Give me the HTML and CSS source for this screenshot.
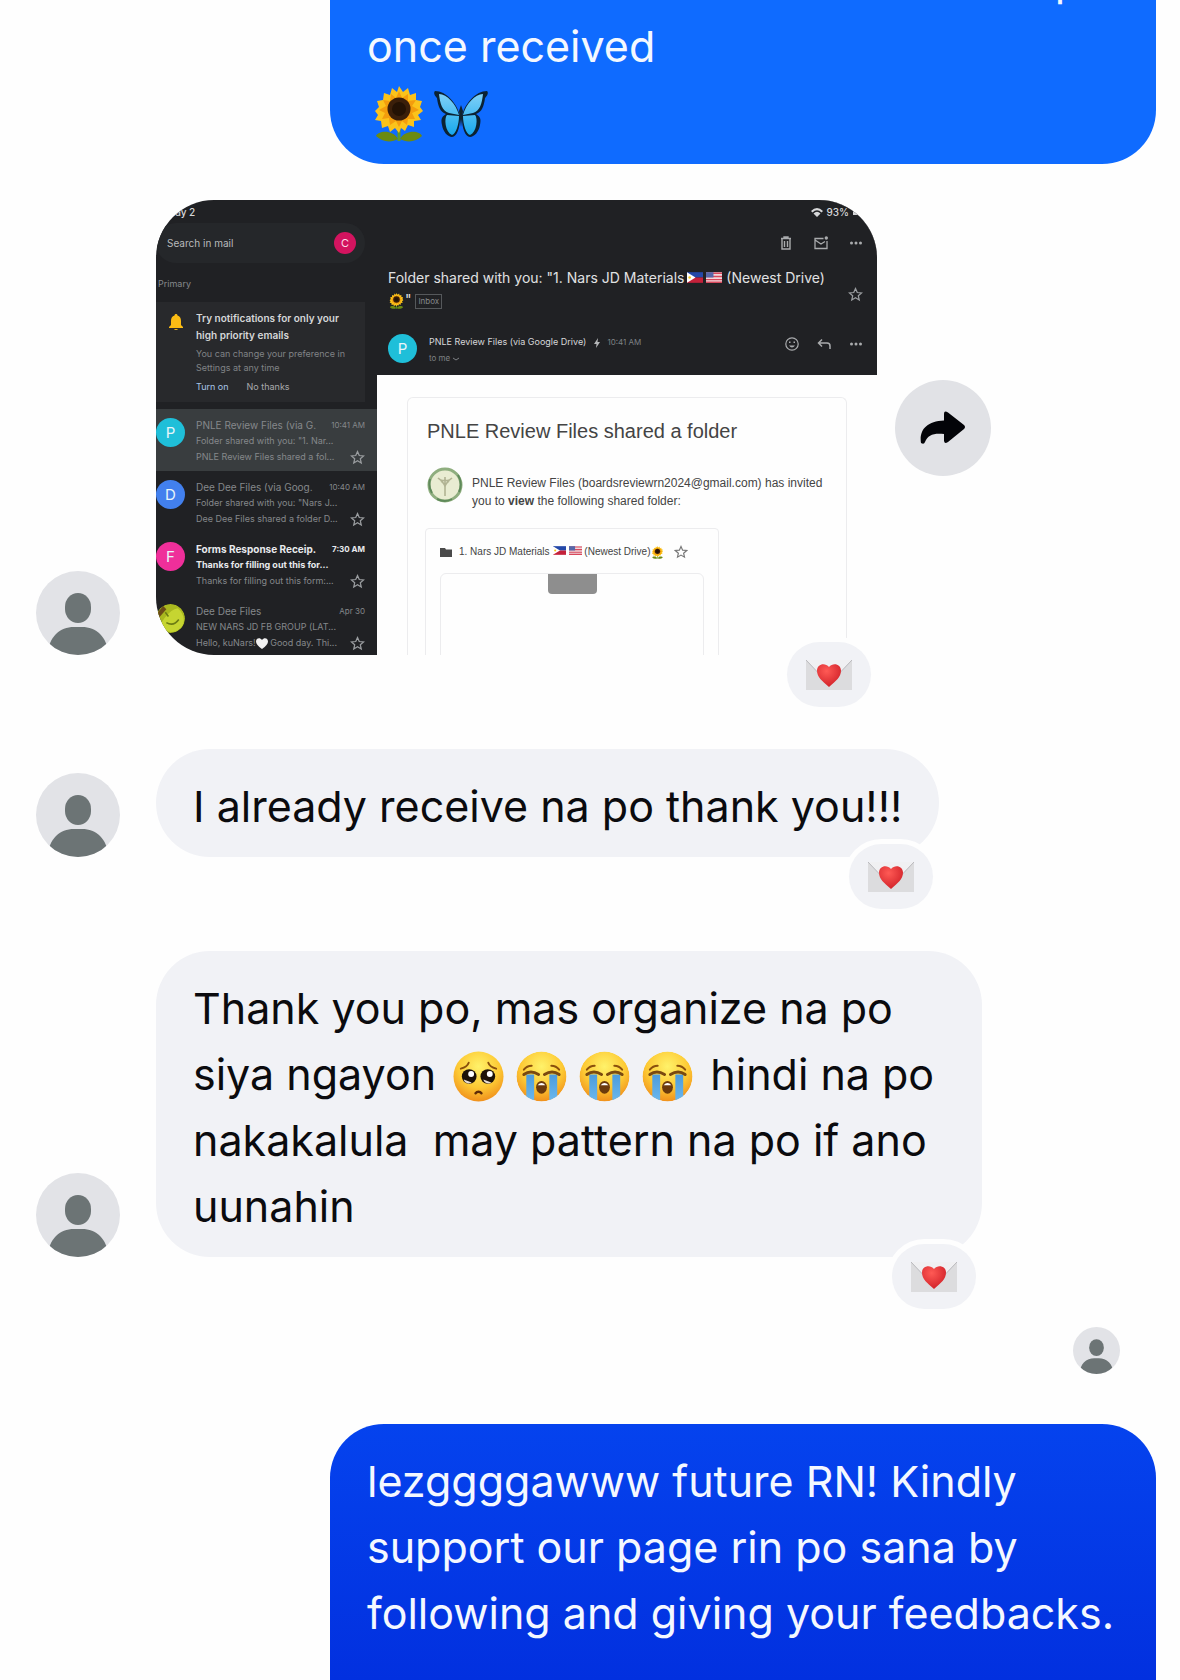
FILE: index.html
```html
<!DOCTYPE html>
<html lang="fil">
<head>
    <meta charset="utf-8">
    <title>Chat</title>
    <link rel="stylesheet" href="styles.css">
</head>
<body>

<!-- shared icons -->
<svg class="sprite" aria-hidden="true">
    <defs>
        <radialGradient id="faceFill" cx="50%" cy="30%" r="70%">
            <stop offset="0" stop-color="#fff26a"/>
            <stop offset="0.6" stop-color="#fdc934"/>
            <stop offset="1" stop-color="#f0901c"/>
        </radialGradient>
        <linearGradient id="tearFill" x1="0" y1="0" x2="0" y2="1">
            <stop offset="0" stop-color="#4c9bdc"/>
            <stop offset="1" stop-color="#6cb9ee"/>
        </linearGradient>
        <radialGradient id="heartFill" cx="40%" cy="30%" r="75%">
            <stop offset="0" stop-color="#ff5a55"/>
            <stop offset="1" stop-color="#cf1f27"/>
        </radialGradient>
        <linearGradient id="wingFill" x1="0" y1="0" x2="0" y2="1">
            <stop offset="0" stop-color="#7fd0f7"/>
            <stop offset="1" stop-color="#17a8ee"/>
        </linearGradient>
        <clipPath id="faceClip"><circle cx="26" cy="26" r="25.5"/></clipPath>
        <clipPath id="userClip"><circle cx="42" cy="42" r="42"/></clipPath>
    </defs>
    <symbol id="user" viewBox="0 0 84 84">
        <g clip-path="url(#userClip)">
            <rect width="84" height="84" fill="#e2e3e7"/>
            <rect x="29" y="22" width="26" height="30" rx="13" ry="14" fill="#6c7475"/>
            <path d="M12 84C12 66 24 56 38 56h8c14 0 26 10 26 28z" fill="#6c7475"/>
        </g>
    </symbol>
    <symbol id="pleading" viewBox="0 0 52 52">
        <circle cx="26" cy="26" r="25.5" fill="url(#faceFill)"/>
        <circle cx="16.500" cy="26" r="7.500" fill="#1d1208"/>
        <circle cx="35.500" cy="26" r="7.500" fill="#1d1208"/>
        <circle cx="18.500" cy="23.500" r="3" fill="#fff"/>
        <circle cx="37.500" cy="23.500" r="3" fill="#fff"/>
        <path d="M11 29a5 5 0 0 0 8 3zM31 29a5 5 0 0 0 8 3z" fill="#e8ddd5"/>
        <path d="M8 18c4-1 7-3 8-6M44 18c-4-1-7-3-8-6" fill="none" stroke="#8a4f0c" stroke-width="2" stroke-linecap="round"/>
        <path d="M23 43c1.500-2 4.500-2 6 0" fill="none" stroke="#5f2c08" stroke-width="2.500" stroke-linecap="round"/>
    </symbol>
    <symbol id="sob" viewBox="0 0 52 52">
        <g clip-path="url(#faceClip)">
            <circle cx="26" cy="26" r="25.5" fill="url(#faceFill)"/>
            <path d="M10.500 24h8v28h-8zM34 24h8v28h-8z" fill="url(#tearFill)"/>
        </g>
        <path d="M8 24q7-5 15 0M29 24q8-5 15 0" fill="none" stroke="#7a4a10" stroke-width="3" stroke-linecap="round"/>
        <path d="M8 19q3-4 8-4M44 19q-3-4-8-4" fill="none" stroke="#8a4f0c" stroke-width="2" stroke-linecap="round"/>
        <ellipse cx="26" cy="37" rx="5.500" ry="6.500" fill="#6b3a0c"/>
        <path d="M22 35q4-5 8 0z" fill="#fff"/>
    </symbol>
    <symbol id="sunflower" viewBox="0 0 48 56">
        <path d="M24 36v19" stroke="#5f9a2a" stroke-width="3"/>
        <path d="M23 53C16 57 7 56 1 50c2-5 16-7 22 3zM25 53c7 4 16 3 22-3-2-5-16-7-22 3z" fill="#6b8a12"/>
        <path d="M24 0l4 6 5-4 2 7 6-2v7l6 1-2 6 3 4-5 4 3 5-7 1 0 6-6-2-3 6-4-3-2 5-4-5-5 4-2-6-6 2-1-7-6-1 3-5-3-4 4-4-2-6 6-1 1-7 6 2 2-7 5 4z" fill="#fbc31b"/>
        <path d="M24 5l3 7 6-4 0 7 8-1-4 6 7 4-7 3 3 6-7 0-1 6-5-4-3 6-3-6-6 4-1-7-7 1 3-6-6-3 7-4-3-6 7 1 1-7 5 4z" fill="#f39d0d"/>
        <circle cx="24" cy="23" r="11.500" fill="#3b1f0a"/>
        <circle cx="24" cy="23" r="7" fill="#241204"/>
    </symbol>
    <symbol id="butterfly" viewBox="0 0 56 48">
        <path d="M27 26C24 13 13 1 2 1c-2 2 0 5 2 7 1 8 3 14 9 16-5 3-5 6-4 11 1 7 6 12 10 12 5 0 8-10 8-18zM29 26C32 13 43 1 54 1c2 2 0 5-2 7-1 8-3 14-9 16 5 3 5 6 4 11-1 7-6 12-10 12-5 0-8-10-8-18z" fill="#0b2233"/>
        <path d="M26 25C23 14 14 4 6 4c1 9 3 17 10 19zM26 26l-12-1c-3 3-2 17 5 20 4-1 7-11 7-19zM30 25c3-11 12-21 20-21-1 9-3 17-10 19zM30 26l12-1c3 3 2 17-5 20-4-1-7-11-7-19z" fill="url(#wingFill)"/>
        <path d="M28 15l2 6-1 8-1 8-1-8-1-8z" fill="#10222e"/>
    </symbol>
    <symbol id="loveletter" viewBox="0 0 46 32">
        <rect y="1" width="46" height="30" fill="#dcdcde"/>
        <path d="M0 1h46L26 22q-3 2-6 0z" fill="#f0f0f2"/>
        <path d="M0 1l20 21q3 2 6 0L46 1" fill="none" stroke="#b9b9bd"/>
        <path d="M23 28C16 22 11 18 11 11.500 11 5 19 3 23 8c4-5 12-3 12 3.500C35 18 30 22 23 28z" fill="url(#heartFill)"/>
    </symbol>
    <symbol id="star" viewBox="0 0 24 24">
        <path d="M12 2.500l2.800 6.300 6.900.7-5.200 4.600 1.500 6.700-6-3.500-6 3.500 1.500-6.700-5.200-4.600 6.900-.7z" fill="none" stroke="currentColor" stroke-width="2"/>
    </symbol>
    <symbol id="dots" viewBox="0 0 14 14">
        <circle cx="2.500" cy="7" r="1.500"/><circle cx="7" cy="7" r="1.500"/><circle cx="11.500" cy="7" r="1.500"/>
    </symbol>
    <symbol id="flagPh" viewBox="0 0 15 10">
        <path d="M0 0h15v5H0z" fill="#2448a8"/><path d="M0 5h15v5H0z" fill="#c4213a"/>
        <path d="M0 0l8 5-8 5z" fill="#fff"/><circle cx="2.500" cy="5" r="1.200" fill="#f5c518"/>
    </symbol>
    <symbol id="flagUs" viewBox="0 0 15 10">
        <path d="M0 0h15v10H0z" fill="#f0d8dc"/>
        <path d="M0 1h15M0 4h15M0 7h15M0 9.500h15" stroke="#d8485c" stroke-width="1.300"/>
        <path d="M0 0h7v5H0z" fill="#5666a8"/>
    </symbol>
</svg>

<main class="chat">

    <div class="row sent first">
        <div class="bubble">
            <div class="cut">p</div>
            once received<br>
            <span class="emojis small-gap"><svg class="sunflower"><use href="#sunflower"/></svg><svg class="butterfly"><use href="#butterfly"/></svg></span>
        </div>
    </div>

    <div class="row received">
        <svg class="avatar" role="img" aria-label="Member"><use href="#user"/></svg>
        <div class="attachment">
            <div class="mail">
                <aside class="sidebar">
                    <div class="date">May 2</div>
                    <div class="search">
                        <input type="text" placeholder="Search in mail" aria-label="Search in mail">
                        <span class="account">C</span>
                    </div>
                    <div class="section">Primary</div>
                    <div class="notice">
                        <svg class="bell" viewBox="0 0 14 16"><path d="M7 0c1 0 1.500.6 1.500 1.600C11 2.400 12 4.500 12 7v4l2 2v1H0v-1l2-2V7c0-2.500 1-4.600 3.500-5.400C5.500.6 6 0 7 0zM5 15h4q-.5 1-2 1t-2-1z" fill="#fbbc14"/></svg>
                        <div>
                            <h3>Try notifications for only your<br>high priority emails</h3>
                            <p>You can change your preference in<br>Settings at any time</p>
                            <button class="on">Turn on</button><button>No thanks</button>
                        </div>
                    </div>
                    <div class="item selected">
                        <span class="letter cyan">P</span>
                        <div class="lines">
                            <div class="top"><span>PNLE Review Files (via G.</span><time>10:41 AM</time></div>
                            <div>Folder shared with you: "1. Nar...</div>
                            <div>PNLE Review Files shared a fol...</div>
                        </div>
                        <svg class="star"><use href="#star"/></svg>
                    </div>
                    <div class="item">
                        <span class="letter blue">D</span>
                        <div class="lines">
                            <div class="top"><span>Dee Dee Files (via Goog.</span><time>10:40 AM</time></div>
                            <div>Folder shared with you: "Nars J...</div>
                            <div>Dee Dee Files shared a folder D...</div>
                        </div>
                        <svg class="star"><use href="#star"/></svg>
                    </div>
                    <div class="item unread">
                        <span class="letter pink">F</span>
                        <div class="lines">
                            <div class="top"><span>Forms Response Receip.</span><time>7:30 AM</time></div>
                            <div class="subject">Thanks for filling out this for...</div>
                            <div>Thanks for filling out this form:...</div>
                        </div>
                        <svg class="star"><use href="#star"/></svg>
                    </div>
                    <div class="item">
                        <svg class="letter" viewBox="0 0 28 28"><circle cx="14" cy="14" r="14" fill="#a9b81f"/><path d="M3 22C7 15 12 6 21 4c6 5 8 13 3 19-6 6-15 5-21-1z" fill="#c6d531"/><path d="M10 18q7 4 12-3M9 8l3 4" fill="none" stroke="#6c7c14" stroke-width="1.500"/><path d="M0 10l7-8 3 3-7 8z" fill="#6b4b18"/></svg>
                        <div class="lines">
                            <div class="top"><span>Dee Dee Files</span><time>Apr 30</time></div>
                            <div>NEW NARS JD FB GROUP (LAT...</div>
                            <div>Hello, kuNars!<svg class="heart" viewBox="0 0 12 11"><path d="M6 11C2 8 0 6 0 3.500 0 0 4-1 6 2c2-3 6-2 6 1.500C12 6 10 8 6 11z" fill="#f1f1f1"/></svg> Good day. Thi...</div>
                        </div>
                        <svg class="star"><use href="#star"/></svg>
                    </div>
                </aside>

                <section class="reader">
                    <header class="head">
                        <div class="status">
                            <svg class="wifi" viewBox="0 0 12 9"><path d="M0 3Q6-3 12 3L10.500 4.500Q6 0 1.500 4.500zM2.500 5.500Q6 2 9.500 5.500L6 9z" fill="#d6d7d9"/></svg>
                            93%
                            <span class="battery"></span>
                        </div>
                        <div class="tools">
                            <button aria-label="Delete"><svg viewBox="0 0 14 14"><path d="M2 2.500h10M5 2V1h4v1M3 3v10h8V3M5.500 5v6M8.500 5v6" fill="none" stroke="currentColor" stroke-width="1.400"/></svg></button>
                            <button aria-label="Mark unread"><svg viewBox="0 0 14 14"><path d="M9.500 2.500H1v10h12V5M1 4l6 4 4-2.500" fill="none" stroke="currentColor" stroke-width="1.300"/><circle cx="12.300" cy="2" r="1.700" fill="currentColor"/></svg></button>
                            <button aria-label="More"><svg><use href="#dots"/></svg></button>
                        </div>
                        <div class="title">
                            <h2>Folder shared with you: "1. Nars JD Materials<svg class="flag"><use href="#flagPh"/></svg><svg class="flag"><use href="#flagUs"/></svg> (Newest Drive)<br><svg class="flower"><use href="#sunflower"/></svg>" <span class="tag">Inbox</span></h2>
                            <svg class="star"><use href="#star"/></svg>
                        </div>
                        <div class="from">
                            <span class="letter cyan">P</span>
                            <div class="who">
                                <div>PNLE Review Files (via Google Drive) <svg class="bolt" viewBox="0 0 6 10"><path d="M4 0L0 6h2.500L2 10l4-6H3.500z" fill="#b5b7b9"/></svg> <time>10:41 AM</time></div>
                                <div class="to">to me <svg class="chev" viewBox="0 0 6 4"><path d="M0 1l3 2 3-2" fill="none" stroke="currentColor"/></svg></div>
                            </div>
                            <div class="tools">
                                <button aria-label="React"><svg viewBox="0 0 14 14"><circle cx="7" cy="7" r="6.200" fill="none" stroke="currentColor" stroke-width="1.200"/><path d="M4 8.500q3 4 6 0zM4 4.500h1.500v1.500H4zM8.500 4.500H10v1.500H8.500z" fill="currentColor"/></svg></button>
                                <button aria-label="Reply"><svg viewBox="0 0 14 14"><path d="M5 2.500L1.500 6 5 9.500M1.500 6H10q3 0 3 3v3" fill="none" stroke="currentColor" stroke-width="1.500"/></svg></button>
                                <button aria-label="More"><svg><use href="#dots"/></svg></button>
                            </div>
                        </div>
                    </header>
                    <div class="letter-body">
                        <div class="card">
                            <h1>PNLE Review Files shared a folder</h1>
                            <div class="invite">
                                <svg viewBox="0 0 36 36"><circle cx="18" cy="18" r="16" fill="#e9ecd2" stroke="#8fae7f" stroke-width="3"/><path d="M3 12q-2 8 2 14M31 8q5 8 1 17M10 32q8 4 15 0" fill="none" stroke="#5f8a5a" stroke-width="2"/><path d="M18 10v19M11 11q4 4 7 2 3 2 7-2M14 14q4 3 4 6 0-3 4-6" fill="none" stroke="#b1b393" stroke-width="1.600"/></svg>
                                <p>PNLE Review Files (boardsreviewrn2024@gmail.com) has invited you to <b>view</b> the following shared folder:</p>
                            </div>
                            <div class="folder">
                                <div class="name">
                                    <svg class="dir" viewBox="0 0 12 9"><path d="M0 0h5l1 1.500h6V9H0z" fill="#4a4a4a"/></svg>
                                    <span>1. Nars JD Materials<svg class="flag"><use href="#flagPh"/></svg><svg class="flag"><use href="#flagUs"/></svg> (Newest Drive)<svg class="flower"><use href="#sunflower"/></svg></span>
                                    <svg class="star"><use href="#star"/></svg>
                                </div>
                                <div class="preview"><div class="tab"></div></div>
                            </div>
                        </div>
                    </div>
                </section>
            </div>
            <button class="reaction" aria-label="Love letter"><svg><use href="#loveletter"/></svg></button>
        </div>
        <button class="share" aria-label="Forward">
            <svg viewBox="0 0 46 34"><path d="M24 3q0-4 4-1.500L44 14q2 2 0 4L28 31q-4 2.500-4-1.500V23C13 22 8 24 5 31q-1 3-4 1C-1 20 6 10 24 9.500z" fill="#030408"/></svg>
        </button>
    </div>

    <div class="row received">
        <svg class="avatar" role="img" aria-label="Member"><use href="#user"/></svg>
        <div class="bubble">
            I already receive na po thank you!!!
            <button class="reaction" aria-label="Love letter"><svg><use href="#loveletter"/></svg></button>
        </div>
    </div>

    <div class="row received">
        <svg class="avatar" role="img" aria-label="Member"><use href="#user"/></svg>
        <div class="bubble wide">
            Thank you po, mas organize na po<br>
            siya ngayon <span class="emojis"><svg><use href="#pleading"/></svg><svg><use href="#sob"/></svg><svg><use href="#sob"/></svg><svg><use href="#sob"/></svg></span> hindi na po<br>
            nakakalula &nbsp;may pattern na po if ano<br>
            uunahin
            <button class="reaction" aria-label="Love letter"><svg><use href="#loveletter"/></svg></button>
        </div>
    </div>

    <div class="seen">
        <svg role="img" aria-label="Seen"><use href="#user"/></svg>
    </div>

    <div class="row sent last">
        <div class="bubble">
            lezggggawww future RN! Kindly<br>
            support our page rin po sana by<br>
            following and giving your feedbacks.
        </div>
    </div>

</main>
</body>
</html>
```

FILE: styles.css
```css
* { box-sizing: border-box; }
body {
    margin: 0;
    background: #fefefe;
    color: #0b0b0e;
    font-family: Inter, "Liberation Sans", sans-serif;
}
button {
    border: 0;
    padding: 0;
    background: none;
    color: inherit;
    font: inherit;
}
.sprite { position: absolute; width: 0; height: 0; }

.chat {
    display: flex;
    flex-direction: column;
    height: 100vh;
    overflow: hidden;
    padding: 0 24px 0 36px;
}
.row { display: flex; flex-shrink: 0; align-items: flex-end; }
.received { gap: 36px; margin-bottom: 94px; }
.sent { justify-content: flex-end; }

/* bubbles */
.bubble {
    position: relative;
    padding: 24px 37px 18px;
    border-radius: 54px;
    background: #f1f2f6;
    font-size: 43px;
    line-height: 66px;
    white-space: nowrap;
}
.bubble.wide { width: 70vw; }
.sent .bubble {
    width: 70vw;
    background: #0f6bff;
    color: #f4f8ff;
}
/* scrolled half out of view */
.first { margin: -77px 0 36px; }
.cut { padding-right: 38px; text-align: right; }
.last { flex: 1 0 auto; align-items: stretch; }
.last .bubble {
    border-radius: 54px 54px 0 0;
    background: linear-gradient(#0543ee, #0230df);
}

.avatar { flex: none; width: 84px; height: 84px; }
.seen {
    display: flex;
    justify-content: flex-end;
    margin: -24px 36px 50px 0;
}
.seen svg { width: 47px; height: 47px; }

.emojis {
    display: inline-flex;
    gap: 12px;
    margin: 0 5px 5px;
    vertical-align: middle;
}
.emojis svg { width: 51px; height: 51px; }
.emojis.small-gap { gap: 10px; margin: 0 8px 4px; }
.emojis .sunflower { width: 48px; height: 56px; }
.emojis .butterfly { width: 56px; height: 48px; margin-top: 4px; }

.reaction {
    position: absolute;
    right: 6px;
    bottom: -52px;
    display: flex;
    align-items: center;
    justify-content: center;
    width: 84px;
    height: 65px;
    border-radius: 33px;
    background: #f1f2f6;
    box-shadow: 0 0 0 5px #fefefe;
}
.reaction svg { width: 46px; height: 32px; }

.share {
    display: flex;
    flex: none;
    align-self: center;
    align-items: center;
    justify-content: center;
    width: 96px;
    height: 96px;
    margin-left: -18px;
    border-radius: 50%;
    background: #e1e2e6;
}
.share svg { width: 46px; height: 34px; }

/* mail screenshot attachment */
.attachment { position: relative; flex: 0 1 721px; }
.mail {
    display: grid;
    grid-template-columns: 221px 1fr;
    aspect-ratio: 721 / 455;
    overflow: hidden;
    border-radius: 58px 58px 0 58px;
    background: #202124;
    color: #d6d7d9;
    font-size: 10px;
}
.mail h1, .mail h2, .mail h3, .mail p { margin: 0; font-weight: 400; }
.star { flex: none; width: 15px; height: 15px; color: #9a9da0; }
.letter {
    display: grid;
    flex: none;
    place-items: center;
    width: 29px;
    height: 29px;
    border-radius: 50%;
    color: #e8f6fa;
    font-size: 15px;
}
.cyan { background: #1fbfd9; }
.blue { background: #4280ee; }
.pink { background: #ef2f9a; }

.sidebar { min-height: 0; }
.date { padding: 4px 0 3px 10px; font-weight: 500; line-height: 16px; }
.search {
    display: flex;
    align-items: center;
    height: 40px;
    margin-right: 12px;
    padding: 0 9px 0 11px;
    border-radius: 20px;
    background: #25272a;
}
.search input {
    flex: 1;
    min-width: 0;
    border: 0;
    padding: 0;
    background: none;
    font: 10px Inter, sans-serif;
}
.search input::placeholder { color: #b8babc; opacity: 1; }
.account {
    width: 22px;
    border-radius: 50%;
    background: #d3145f;
    color: #fbdbe8;
    font-size: 11px;
    line-height: 22px;
    text-align: center;
}
.section {
    padding: 13px 2px 10px;
    color: #85888b;
    font-size: 9px;
    line-height: 16px;
}
.notice {
    display: flex;
    gap: 13px;
    height: 100px;
    margin: 0 12px 7px 0;
    padding: 8px 0 0 13px;
    background: #28292c;
    white-space: nowrap;
}
.bell { width: 14px; height: 16px; margin-top: 4px; }
.notice h3 { font-size: 10px; font-weight: 600; line-height: 17px; }
.notice p { margin: 3px 0 5px; color: #808386; font-size: 9px; line-height: 14px; }
.notice button { margin-right: 18px; color: #a8aaac; font-size: 9px; }
.notice .on { color: #a8c7e8; }

.item {
    display: flex;
    height: 62px;
    padding: 8px 12px 0 0;
    color: #85888b;
    font-size: 9px;
    line-height: 16px;
    white-space: nowrap;
}
.item.selected { background: #393d3f; }
.item .letter { margin: 1px 11px 0 0; }
.item .lines { flex: 1; min-width: 0; }
.item .top { display: flex; justify-content: space-between; margin-right: -15px; }
.item .top span { font-size: 10px; }
.item time { font-size: 8px; }
.item .star { align-self: flex-end; margin-bottom: 6px; }
.unread .top, .unread .subject { color: #e8eaed; font-weight: 700; }
.heart { width: 12px; height: 11px; vertical-align: middle; }

.reader {
    display: flex;
    flex-direction: column;
    min-width: 0;
    min-height: 0;
    background: #fefefe;
}
.head {
    flex: none;
    height: 175px;
    padding: 4px 14px 0 11px;
    background: #202124;
}
.status {
    display: flex;
    gap: 4px;
    align-items: center;
    justify-content: flex-end;
    font-weight: 500;
    line-height: 16px;
}
.wifi { width: 12px; height: 9px; }
.battery { width: 10px; height: 6px; background: #d6d7d9; }
.tools {
    display: flex;
    gap: 21px;
    align-items: flex-start;
    justify-content: flex-end;
    color: #a9abad;
}
.tools svg { display: block; width: 14px; height: 14px; fill: currentColor; }
.head > .tools { padding-top: 16px; }
.title {
    display: flex;
    align-items: center;
    justify-content: space-between;
    margin-top: 17px;
}
.title .star { margin-top: 10px; }
.title h2 { color: #e0e1e3; font-size: 14px; line-height: 22px; white-space: nowrap; }
.title .flag { width: 16px; height: 11px; margin-left: 3px; }
.flower { width: 15px; height: 16px; margin: 0 1px; vertical-align: middle; }
.tag {
    display: inline-block;
    padding: 0 2px;
    border: 1px solid #55585b;
    color: #85888b;
    font-size: 8px;
    line-height: 13px;
    vertical-align: middle;
}
.from { display: flex; gap: 12px; margin-top: 23px; }
.who { flex: 1; line-height: 16px; white-space: nowrap; }
.who time, .to { color: #7e8184; font-size: 8px; }
.who > div:first-child { font-size: 9px; }
.bolt { width: 6px; height: 10px; margin: 0 5px; vertical-align: middle; }
.chev { width: 6px; height: 4px; }
.from .tools { gap: 18px; padding-top: 3px; }

.letter-body { flex: 1; min-height: 0; padding: 22px 30px 0; }
.card {
    height: 100%;
    padding: 19px 17px 0;
    border: 1px solid #ececee;
    border-bottom: 0;
    border-radius: 6px 6px 0 0;
    color: #444;
    font-family: "Liberation Sans", Arial, sans-serif;
}
.card h1 { margin-left: 2px; font-size: 20px; line-height: 28px; }
.invite { display: flex; gap: 9px; align-items: center; margin: 21px 0 24px 2px; }
.invite svg { flex: none; width: 36px; height: 36px; }
.invite p { padding-top: 14px; font-size: 12px; line-height: 18px; }
.card .invite { height: 38px; }
.folder {
    width: 294px;
    height: 140px;
    padding: 15px 14px 0;
    border: 1px solid #ececee;
    border-radius: 4px;
}
.name { display: flex; align-items: center; height: 16px; font-size: 10px; white-space: nowrap; }
.dir { width: 12px; height: 9px; margin-right: 7px; }
.name .flag { width: 13px; height: 9px; margin-left: 3px; }
.name .flower { width: 11px; height: 13px; margin: 0 0 0 2px; }
.name .star { width: 14px; height: 14px; margin-left: 11px; color: #777; }
.preview {
    height: 100px;
    margin-top: 13px;
    border: 1px solid #ececee;
    border-radius: 6px;
}
.tab {
    width: 49px;
    height: 20px;
    margin: 0 auto;
    border-radius: 0 0 4px 4px;
    background: #8e8e8e;
}
```
